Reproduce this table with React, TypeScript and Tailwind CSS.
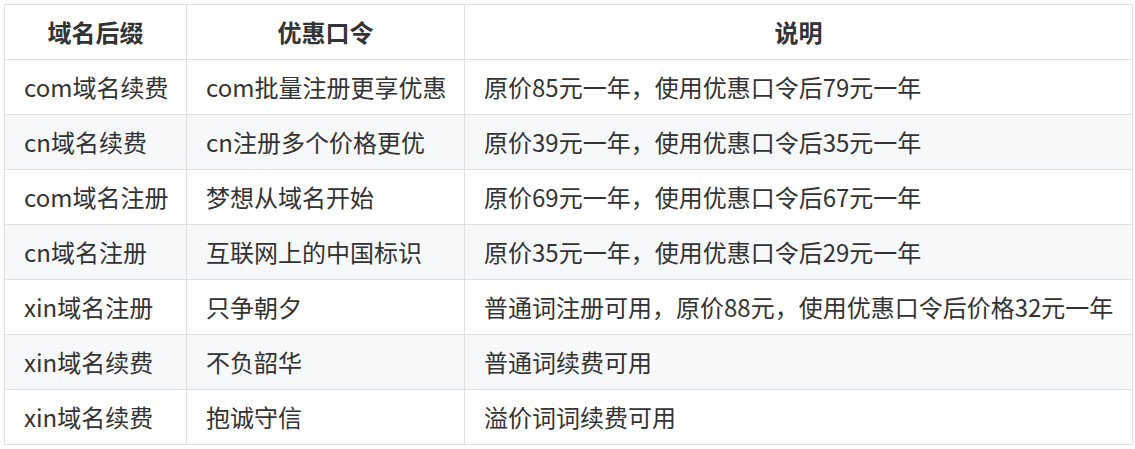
const rows = [
  { suffix: 'com域名续费', code: 'com批量注册更享优惠', note: '原价85元一年，使用优惠口令后79元一年' },
  { suffix: 'cn域名续费', code: 'cn注册多个价格更优', note: '原价39元一年，使用优惠口令后35元一年' },
  { suffix: 'com域名注册', code: '梦想从域名开始', note: '原价69元一年，使用优惠口令后67元一年' },
  { suffix: 'cn域名注册', code: '互联网上的中国标识', note: '原价35元一年，使用优惠口令后29元一年' },
  { suffix: 'xin域名注册', code: '只争朝夕', note: '普通词注册可用，原价88元，使用优惠口令后价格32元一年' },
  { suffix: 'xin域名续费', code: '不负韶华', note: '普通词续费可用' },
  { suffix: 'xin域名续费', code: '抱诚守信', note: '溢价词词续费可用' },
];

const th = 'h-[55px] border border-[#dfe2e5] px-[19px] text-center align-middle font-bold';
const td = 'h-[55px] border border-[#dfe2e5] px-[19px] text-left align-middle whitespace-nowrap';

const App = () => {
  return (
    <div className="min-h-[449px] w-[1135px] bg-white pl-[4px] pt-[4px]">
      <table
        className="w-[1128px] table-fixed border-collapse text-[24px] leading-[32px] text-[#333]"
        style={{ fontFamily: '"Noto Sans CJK SC", "Noto Sans", sans-serif' }}
      >
        <colgroup>
          <col className="w-[182px]" />
          <col className="w-[278px]" />
          <col className="w-[668px]" />
        </colgroup>
        <thead>
          <tr className="bg-white">
            <th className={th}>域名后缀</th>
            <th className={th}>优惠口令</th>
            <th className={th}>说明</th>
          </tr>
        </thead>
        <tbody>
          {rows.map((r, i) => (
            <tr key={i} className={i % 2 === 1 ? 'bg-[#f6f8fa]' : 'bg-white'}>
              <td className={td}>{r.suffix}</td>
              <td className={td}>{r.code}</td>
              <td className={td}>{r.note}</td>
            </tr>
          ))}
        </tbody>
      </table>
    </div>
  );
};

export default App;
